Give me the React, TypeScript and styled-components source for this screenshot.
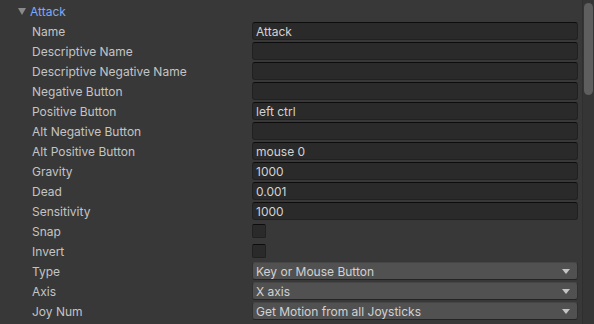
import styled, { createGlobalStyle } from "styled-components";

const Global = createGlobalStyle`
  html, body {
    margin: 0;
    padding: 0;
    background: #383838;
    font-family: Inter, "Noto Sans", "Liberation Sans", sans-serif;
    font-size: 12px;
    color: #c4c4c4;
  }
`;

const Inspector = styled.div`
  display: flex;
  width: 594px;
  height: 324px;
  overflow: hidden;
`;

const Conteudo = styled.div`
  flex: 1;
  padding: 1px 4px 0 0;
`;

const Cabecalho = styled.div`
  display: flex;
  align-items: center;
  gap: 4px;
  height: 20px;
  padding-left: 18px;
  color: #7baaf7;
`;

const Seta = styled.span`
  width: 0;
  height: 0;
  border-left: 4px solid transparent;
  border-right: 4px solid transparent;
  border-top: 7px solid #8a8a8a;
`;

const Linha = styled.div`
  display: grid;
  grid-template-columns: 220px 1fr;
  align-items: center;
  height: 20px;
  padding-left: 32px;
`;

const Rotulo = styled.span`
  white-space: nowrap;
`;

const Campo = styled.div`
  height: 18px;
  box-sizing: border-box;
  display: flex;
  align-items: center;
  padding-left: 3px;
  background: #2a2a2a;
  border: 1px solid #212121;
  border-top-color: #0d0d0d;
  border-radius: 3px;
  color: #d2d2d2;
`;

const Caixa = styled.div`
  width: 14px;
  height: 14px;
  box-sizing: border-box;
  background: #2a2a2a;
  border: 1px solid #212121;
  border-top-color: #0d0d0d;
  border-radius: 2px;
`;

const Lista = styled.div`
  height: 18px;
  box-sizing: border-box;
  display: flex;
  align-items: center;
  justify-content: space-between;
  padding: 0 7px 0 3px;
  background: #515151;
  border: 1px solid #303030;
  border-top-color: #464646;
  border-bottom-color: #242424;
  border-radius: 3px;
  color: #d2d2d2;
`;

const SetaLista = styled.span`
  width: 0;
  height: 0;
  border-left: 4px solid transparent;
  border-right: 4px solid transparent;
  border-top: 5px solid #c4c4c4;
`;

const Trilho = styled.div`
  width: 12px;
  background: #353535;
  border-left: 1px solid #2f2f2f;
  box-sizing: border-box;
  padding: 3px 1px 0 1px;
`;

const Polegar = styled.div`
  height: 92px;
  background: #5e5e5e;
  border-radius: 5px;
`;

type Propriedade =
  | { rotulo: string; tipo: "texto"; valor: string }
  | { rotulo: string; tipo: "caixa" }
  | { rotulo: string; tipo: "lista"; valor: string };

const propriedades: Propriedade[] = [
  { rotulo: "Name", tipo: "texto", valor: "Attack" },
  { rotulo: "Descriptive Name", tipo: "texto", valor: "" },
  { rotulo: "Descriptive Negative Name", tipo: "texto", valor: "" },
  { rotulo: "Negative Button", tipo: "texto", valor: "" },
  { rotulo: "Positive Button", tipo: "texto", valor: "left ctrl" },
  { rotulo: "Alt Negative Button", tipo: "texto", valor: "" },
  { rotulo: "Alt Positive Button", tipo: "texto", valor: "mouse 0" },
  { rotulo: "Gravity", tipo: "texto", valor: "1000" },
  { rotulo: "Dead", tipo: "texto", valor: "0.001" },
  { rotulo: "Sensitivity", tipo: "texto", valor: "1000" },
  { rotulo: "Snap", tipo: "caixa" },
  { rotulo: "Invert", tipo: "caixa" },
  { rotulo: "Type", tipo: "lista", valor: "Key or Mouse Button" },
  { rotulo: "Axis", tipo: "lista", valor: "X axis" },
  { rotulo: "Joy Num", tipo: "lista", valor: "Get Motion from all Joysticks" },
];

export default function App() {
  return (
    <>
      <Global />
      <Inspector>
        <Conteudo>
          <Cabecalho>
            <Seta />
            Attack
          </Cabecalho>
          {propriedades.map((p) => (
            <Linha key={p.rotulo}>
              <Rotulo>{p.rotulo}</Rotulo>
              {p.tipo === "texto" && <Campo>{p.valor}</Campo>}
              {p.tipo === "caixa" && <Caixa />}
              {p.tipo === "lista" && (
                <Lista>
                  {p.valor}
                  <SetaLista />
                </Lista>
              )}
            </Linha>
          ))}
        </Conteudo>
        <Trilho>
          <Polegar />
        </Trilho>
      </Inspector>
    </>
  );
}
